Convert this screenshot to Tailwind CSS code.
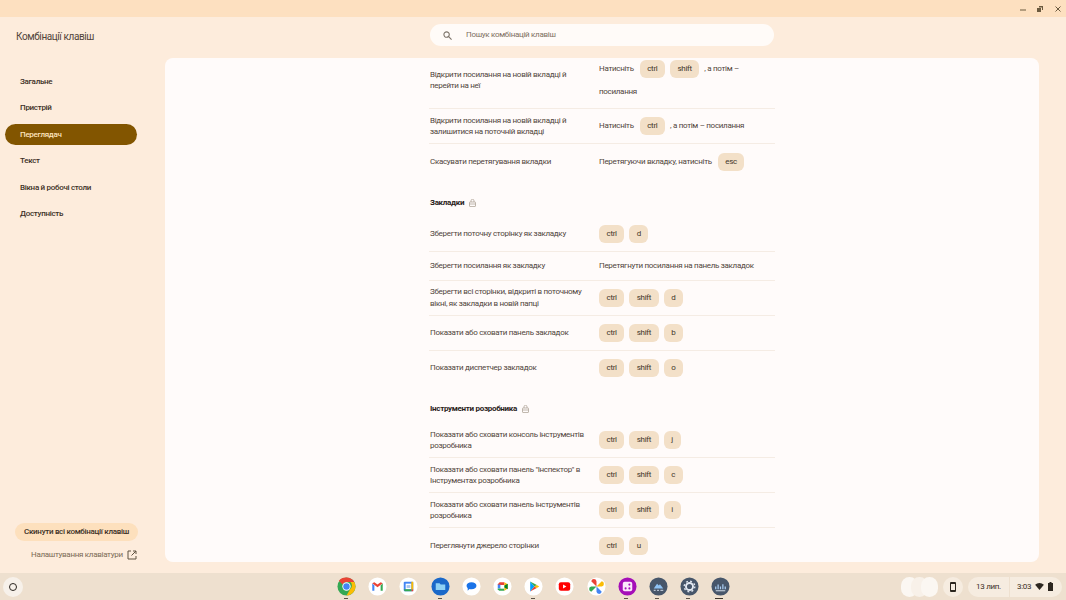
<!DOCTYPE html>
<html lang="uk">
<head>
    <meta charset="UTF-8">
    <meta name="viewport" content="width=device-width, initial-scale=1.0">
    <title>Комбінації клавіш</title>
    <script src="https://cdn.jsdelivr.net/npm/@tailwindcss/browser@4"></script>
</head>
<body class="bg-[#fdecdc] font-['Roboto','Noto_Sans',sans-serif] overflow-hidden tracking-[-0.3px]">
    <div class="w-[1066px] h-[600px] flex flex-col overflow-hidden">
        <!-- title bar -->
        <div class="h-[17px] bg-[#fde0c0] flex items-center justify-end gap-[9px] pr-[4px] shrink-0">
            <svg class="w-[8px] h-[8px]" viewBox="0 0 8 8"><path d="M1 5h6" stroke="#6b5a3f" stroke-width="1"/></svg>
            <svg class="w-[8px] h-[8px]" viewBox="0 0 8 8"><path d="M3 1h4v4H6V2.500H3zM1 3h4v4H1z" fill="#6b5a3f"/></svg>
            <svg class="w-[8px] h-[8px] ml-[1px]" viewBox="0 0 8 8"><path d="M1.500 1.500l5 5M6.500 1.500l-5 5" stroke="#6b5a3f" stroke-width="1"/></svg>
        </div>

        <div class="flex-1 flex min-h-0">
            <!-- sidebar -->
            <aside class="w-[165px] shrink-0 flex flex-col">
                <div class="pl-[16px] pt-[13px] h-[54px] text-[10px] leading-[14px] tracking-[-0.4px] text-[#51443a]">Комбінації клавіш</div>
                <nav class="flex flex-col text-[8px] font-medium text-[#3c3026]">
                    <a class="h-[21px] mb-[5.6px] ml-[5px] w-[132px] pl-[15px] flex items-center rounded-full">Загальне</a>
                    <a class="h-[21px] mb-[5.6px] ml-[5px] w-[132px] pl-[15px] flex items-center rounded-full">Пристрій</a>
                    <a class="h-[21px] mb-[5.6px] ml-[5px] w-[132px] pl-[15px] flex items-center rounded-full bg-[#825500] text-[#fde3bd]">Переглядач</a>
                    <a class="h-[21px] mb-[5.6px] ml-[5px] w-[132px] pl-[15px] flex items-center rounded-full">Текст</a>
                    <a class="h-[21px] mb-[5.6px] ml-[5px] w-[132px] pl-[15px] flex items-center rounded-full">Вікна й робочі столи</a>
                    <a class="h-[21px] mb-[5.6px] ml-[5px] w-[132px] pl-[15px] flex items-center rounded-full">Доступність</a>
                </nav>
                <div class="mt-auto pb-[9px] flex flex-col items-start">
                    <button class="ml-[15px] w-[123px] h-[18px] rounded-full bg-[#fde0bd] text-[8px] font-medium text-[#3c3026] flex items-center justify-center">Скинути всі комбінації клавіш</button>
                    <div class="ml-[31px] mt-[5px] h-[18px] flex items-center gap-[4px] text-[8px] text-[#7b6a55]">
                        <span>Налаштування клавіатури</span>
                        <svg class="w-[10px] h-[10px]" viewBox="0 0 10 10" fill="none" stroke="#5f5240" stroke-width="1"><path d="M4 1H1v8h8V6M6 1h3v3M9 1L4.500 5.500"/></svg>
                    </div>
                </div>
            </aside>

            <!-- main column -->
            <main class="flex-1 flex flex-col min-w-0 pr-[27px] pb-[11px]">
                <div class="h-[41px] shrink-0 pt-[7px] pl-[265px]">
                    <div class="w-[344px] h-[22px] rounded-full bg-[#fffbf8] flex items-center pl-[13px] gap-[14px] text-[8px] text-[#7d6f60]">
                        <svg class="w-[9px] h-[9px]" viewBox="0 0 10 10" fill="none" stroke="#7d746a" stroke-width="1.200"><circle cx="4" cy="4" r="3"/><path d="M6.300 6.300L9.500 9.500"/></svg>
                        <span>Пошук комбінацій клавіш</span>
                    </div>
                </div>
                <div class="flex-1 min-h-0 overflow-hidden rounded-[8px] bg-[#fffbfa]">
                    <div id="list" class="ml-[264px] w-[346px] -mt-[6px] text-[8px] text-[#51453a]"></div>
                </div>
            </main>
        </div>

        <!-- shelf -->
        <footer class="h-[27px] shrink-0 bg-[#eee0cf] flex items-center relative">
            <div class="ml-[3px] w-[20px] h-[20px] rounded-full bg-[#f7f1ea] flex items-center justify-center">
                <div class="w-[8px] h-[8px] rounded-full border-[1.500px] border-[#2a2520]"></div>
            </div>
            <div class="absolute left-[337px] top-[4px] flex gap-[12.200px]">
                <!-- chrome -->
                <svg class="w-[19px] h-[19px]" viewBox="0 0 20 20"><circle cx="10" cy="10" r="9.500" fill="#34a853"/><path d="M10 .5a9.500 9.500 0 0 1 8.200 4.800H10a4.700 4.700 0 0 0-4.200 2.700L2 3.900A9.500 9.500 0 0 1 10 .5z" fill="#ea4335"/><path d="M18.200 5.300A9.500 9.500 0 0 1 10 19.500l4-7a4.700 4.700 0 0 0 0-7.200z" fill="#fbbc04"/><circle cx="10" cy="10" r="4.400" fill="#fff"/><circle cx="10" cy="10" r="3.400" fill="#4285f4"/></svg>
                <!-- gmail -->
                <svg class="w-[19px] h-[19px]" viewBox="0 0 20 20"><circle cx="10" cy="10" r="9.500" fill="#fff"/><path d="M4.500 6.500v8h2.200V9z" fill="#4285f4"/><path d="M15.500 6.500v8h-2.200V9z" fill="#34a853"/><path d="M4.500 6.500L10 10.800 15.500 6.500 13.300 5.500 10 8 6.700 5.500z" fill="#ea4335"/></svg>
                <!-- calendar -->
                <svg class="w-[19px] h-[19px]" viewBox="0 0 20 20"><circle cx="10" cy="10" r="9.500" fill="#fff"/><rect x="5" y="5" width="10" height="10" rx="1" fill="#4285f4"/><rect x="7" y="7" width="6" height="6" fill="#fff"/><path d="M13 13h2v2h-2z" fill="#ea4335"/><path d="M5 13h8v2H6z" fill="#34a853"/><path d="M13 5h2v8h-2z" fill="#fbbc04"/><path d="M8 8.500h4v3H8z" fill="#a8c5f0"/></svg>
                <!-- files -->
                <svg class="w-[19px] h-[19px]" viewBox="0 0 20 20"><circle cx="10" cy="10" r="9.500" fill="#1a68c9"/><path d="M5 6.500h4l1.200 1.300H15v6H5z" fill="#8ed1f5"/></svg>
                <!-- messages -->
                <svg class="w-[19px] h-[19px]" viewBox="0 0 20 20"><circle cx="10" cy="10" r="9.500" fill="#fff"/><path d="M10 5.500c3 0 5.200 1.500 5.200 3.700S13 13 10 13c-.8 0-1.500-.1-2.200-.3L6 14.500v-2.700c-.8-.7-1.200-1.600-1.200-2.600C4.800 7 7 5.500 10 5.500z" fill="#1a73e8"/></svg>
                <!-- meet -->
                <svg class="w-[19px] h-[19px]" viewBox="0 0 20 20"><circle cx="10" cy="10" r="9.500" fill="#fff"/><path d="M5 7.500L7 5.500h5v3H5z" fill="#ea4335"/><path d="M5 8h3v4H5z" fill="#4285f4"/><path d="M5 12h7v2.500H6.500L5 13z" fill="#34a853"/><path d="M8 8.500h4v3.500H8z" fill="#fff"/><path d="M12 5.500v9l3.500-2.500V7.500z" fill="#fbbc04"/><path d="M12 9l3.500-2v6L12 11z" fill="#00832d"/></svg>
                <!-- play -->
                <svg class="w-[19px] h-[19px]" viewBox="0 0 20 20"><circle cx="10" cy="10" r="9.500" fill="#fff"/><path d="M6.500 4.800L11 10l-4.500 5.200z" fill="#00a0ff"/><path d="M6.500 4.800l7 3.700L11 10z" fill="#34a853"/><path d="M6.500 15.200l7-3.700L11 10z" fill="#ea4335"/><path d="M13.500 8.500l2.500 1.500-2.500 1.500L11 10z" fill="#fbbc04"/></svg>
                <!-- youtube -->
                <svg class="w-[19px] h-[19px]" viewBox="0 0 20 20"><circle cx="10" cy="10" r="9.500" fill="#fff"/><rect x="4" y="5.500" width="12" height="9" rx="2.200" fill="#f00"/><path d="M8.500 8l3.500 2-3.500 2z" fill="#fff"/></svg>
                <!-- photos -->
                <svg class="w-[19px] h-[19px]" viewBox="0 0 20 20"><circle cx="10" cy="10" r="9.500" fill="#fff"/><path d="M10 10V4.500a2.800 2.800 0 0 0-5.500 0z" fill="#fbbc04" transform="rotate(90 10 10)"/><path d="M10 10V4.500a2.800 2.800 0 0 0-5.500 0z" fill="#ea4335"/><path d="M10 10V4.500a2.800 2.800 0 0 0-5.500 0z" fill="#4285f4" transform="rotate(180 10 10)"/><path d="M10 10V4.500a2.800 2.800 0 0 0-5.500 0z" fill="#34a853" transform="rotate(270 10 10)"/></svg>
                <!-- purple app -->
                <svg class="w-[19px] h-[19px]" viewBox="0 0 20 20"><circle cx="10" cy="10" r="9.500" fill="#a50fb8"/><rect x="5" y="5" width="10" height="10" rx="2" fill="#fbe9fb"/><circle cx="12" cy="8" r="1.100" fill="#a50fb8"/><circle cx="8" cy="12" r="1.100" fill="#a50fb8"/><circle cx="12" cy="12" r="1.100" fill="#a50fb8"/></svg>
                <!-- dev app 1 -->
                <svg class="w-[19px] h-[19px]" viewBox="0 0 20 20"><circle cx="10" cy="10" r="9.500" fill="#47566a"/><path d="M5 12l3.500-5 1.800 2 1.200-1.500L15 12z" fill="#8fc3f5"/><path d="M5 14h2M8.500 14h2M12 14h3" stroke="#dce6f2" stroke-width="1"/></svg>
                <!-- settings -->
                <svg class="w-[19px] h-[19px]" viewBox="0 0 20 20"><circle cx="10" cy="10" r="9.500" fill="#47566a"/><circle cx="10" cy="10" r="3.700" fill="none" stroke="#e3e9f2" stroke-width="2"/><circle cx="10" cy="10" r="5.600" fill="none" stroke="#e3e9f2" stroke-width="1.400" stroke-dasharray="2 2.400"/></svg>
                <!-- dev app 2 -->
                <svg class="w-[19px] h-[19px]" viewBox="0 0 20 20"><circle cx="10" cy="10" r="9.500" fill="#47566a"/><path d="M5 13V10M7.500 13V8M10 13V10M12.500 13V7.500M15 13V10" stroke="#a9cdf2" stroke-width="1.300"/><path d="M5 14.500h10" stroke="#dce6f2" stroke-width="1"/></svg>
            </div>
            <!-- shelf running dots -->
            <div class="absolute left-[344px] top-[25px] w-[4px] h-[1px] bg-[#5c5247]"></div>
            <div class="absolute left-[438px] top-[25px] w-[4px] h-[1px] bg-[#5c5247]"></div>
            <div class="absolute left-[531px] top-[25px] w-[4px] h-[1px] bg-[#5c5247]"></div>
            <div class="absolute left-[624px] top-[25px] w-[4px] h-[1px] bg-[#5c5247]"></div>
            <div class="absolute left-[655px] top-[25px] w-[4px] h-[1px] bg-[#5c5247]"></div>
            <div class="absolute left-[686px] top-[25px] w-[4px] h-[1px] bg-[#5c5247]"></div>
            <div class="absolute left-[715px] top-[25px] w-[8px] h-[1px] bg-[#3c342b]"></div>

            <!-- status tray -->
            <div class="ml-auto flex items-center mr-[4px] text-[8px] text-[#3c3026]">
                <div class="w-[37px] h-[20px] mr-[5px] flex">
                    <span class="w-[17px] h-[20px] rounded-full bg-[#fbf7f2]"></span>
                    <span class="w-[17px] h-[20px] -ml-[7px] rounded-full bg-[#f8f1e9]"></span>
                    <span class="w-[17px] h-[20px] -ml-[7px] rounded-full bg-[#fbf7f2]"></span>
                </div>
                <div class="w-[20px] h-[20px] rounded-full bg-[#f6ece0] mr-[5px] flex items-center justify-center">
                    <svg class="w-[8px] h-[10px]" viewBox="0 0 8 10"><rect x="1" y="0" width="6" height="10" rx="1" fill="#2c261f"/><rect x="2" y="2" width="4" height="6" fill="#f6ece0"/></svg>
                </div>
                <div class="w-[41px] h-[20px] rounded-l-full rounded-r-[3px] bg-[#f6ece0] mr-[1px] flex items-center justify-center">13 лип.</div>
                <div class="w-[52px] h-[20px] rounded-r-full rounded-l-[3px] bg-[#f6ece0] flex items-center pl-[7px] gap-[4px]">
                    <span>3:03</span>
                    <svg class="w-[9px] h-[7px]" viewBox="0 0 10 8"><path d="M0 2a7.500 7.500 0 0 1 10 0L5 8z" fill="#2c261f"/></svg>
                    <svg class="w-[5px] h-[9px]" viewBox="0 0 5 9"><path d="M1.500 0h2v1H5v8H0V1h1.500z" fill="#2c261f"/></svg>
                </div>
            </div>
        </footer>
    </div>

    <script>
        const key = k => `<span class="h-[18px] px-[7.500px] min-w-[17px] rounded-[6px] bg-[#f3e0c8] text-[#43372a] text-[8px] flex items-center justify-center">${k}</span>`;
        const keys = list => `<div class="flex items-center gap-[5px]">${list.map(key).join('')}</div>`;
        const lock = `<svg class="w-[7px] h-[8px] ml-[5px]" viewBox="0 0 7 8" fill="none" stroke="#a89c8e" stroke-width=".7"><rect x=".5" y="3" width="6" height="4.500" rx=".5"/><path d="M2 3V1.800a1.500 1.500 0 0 1 3 0V3M.5 5h6"/></svg>`;

        const sections = [
            { rows: [
                { h: 'h-[57px]', label: 'Відкрити посилання на новій вкладці й перейти на неї', html: `<div class="flex flex-wrap items-center leading-[23px] gap-x-[5px] w-[170px]"><span class="mr-[1px]">Натисніть</span>${key('ctrl')}${key('shift')}<span>, а потім –</span><span class="w-full">посилання</span></div>` },
                { label: 'Відкрити посилання на новій вкладці й залишитися на поточній вкладці', html: `<div class="flex items-center gap-[5px]"><span class="mr-[1px]">Натисніть</span>${key('ctrl')}<span>, а потім – посилання</span></div>` },
                { label: 'Скасувати перетягування вкладки', html: `<div class="flex items-center gap-[5px]"><span class="mr-[1px]">Перетягуючи вкладку, натисніть</span>${key('esc')}</div>` },
            ]},
            { title: 'Закладки', rows: [
                { label: 'Зберегти поточну сторінку як закладку', html: keys(['ctrl', 'd']) },
                { h: 'h-[29px]', label: 'Зберегти посилання як закладку', html: '<span>Перетягнути посилання на панель закладок</span>' },
                { label: 'Зберегти всі сторінки, відкриті в поточному вікні, як закладки в новій папці', html: keys(['ctrl', 'shift', 'd']) },
                { label: 'Показати або сховати панель закладок', html: keys(['ctrl', 'shift', 'b']) },
                { label: 'Показати диспетчер закладок', html: keys(['ctrl', 'shift', 'o']) },
            ]},
            { title: 'Інструменти розробника', rows: [
                { label: 'Показати або сховати консоль інструментів розробника', html: keys(['ctrl', 'shift', 'j']) },
                { label: 'Показати або сховати панель "Інспектор" в Інструментах розробника', html: keys(['ctrl', 'shift', 'c']) },
                { label: 'Показати або сховати панель інструментів розробника', html: keys(['ctrl', 'shift', 'i']) },
                { label: 'Переглянути джерело сторінки', html: keys(['ctrl', 'u']) },
            ]},
        ];

        let html = '';
        sections.forEach(section => {
            if (section.title) {
                html += `<div class="h-[37.500px] pl-[1px] pt-[10px] flex items-center font-bold text-[#2a2119]">${section.title}${lock}</div>`;
            }
            section.rows.forEach((row, i) => {
                const border = i < section.rows.length - 1 ? 'border-b border-[#f5ece4]' : '';
                html += `
                    <div class="flex items-center ${row.h || 'h-[35px]'} ${border}">
                        <div class="w-[170px] pl-[1px] pr-[15px] leading-[11.500px]">${row.label}</div>
                        <div>${row.html}</div>
                    </div>`;
            });
        });
        document.getElementById('list').innerHTML = html;
    </script>
</body>
</html>
